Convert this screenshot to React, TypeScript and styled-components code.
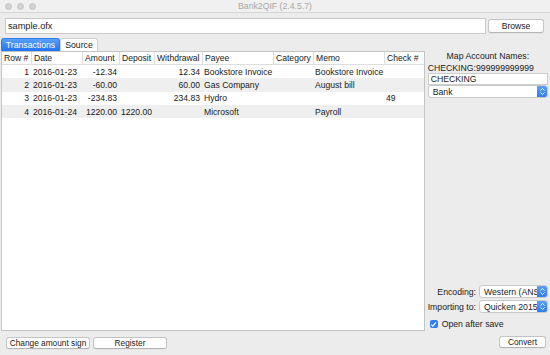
import styled, { createGlobalStyle } from 'styled-components';

const GlobalStyle = createGlobalStyle`
  html, body {
    margin: 0;
    padding: 0;
    background: #ececec;
  }
  * {
    box-sizing: border-box;
  }
`;

const Window = styled.div`
  width: 550px;
  height: 355px;
  display: flex;
  flex-direction: column;
  background: #ececec;
  font-family: 'Liberation Sans', Arial, sans-serif;
  font-size: 8.7px;
  color: #1a1a1a;
  overflow: hidden;
`;

const TitleBar = styled.div`
  position: relative;
  height: 13px;
  flex: 0 0 13px;
  display: flex;
  align-items: center;
  justify-content: center;
  background: #f0f0f0;
  border-bottom: 1px solid #d6d6d6;
  color: #a8a8a8;
`;

const Lights = styled.div`
  position: absolute;
  left: 5px;
  top: 3px;
  display: flex;
  gap: 5px;
`;

const Light = styled.span`
  width: 7px;
  height: 7px;
  border-radius: 50%;
  background: #d3d3d3;
  border: 1px solid #c6c6c6;
`;

const FileRow = styled.div`
  display: flex;
  align-items: center;
  gap: 2px;
  padding: 5px 6px 4px 5px;
`;

const FileInput = styled.div`
  flex: 1;
  height: 16px;
  background: #fff;
  border: 1px solid #c9c9c9;
  display: flex;
  align-items: center;
  padding-left: 2px;
  font-size: 9.2px;
`;

const Button = styled.button<{ $width?: number }>`
  width: ${(p) => (p.$width ? `${p.$width}px` : 'auto')};
  height: 12px;
  padding: 0;
  background: #fff;
  border: 1px solid #c4c4c4;
  border-bottom-color: #b4b4b4;
  border-radius: 3px;
  font-family: inherit;
  font-size: 8.3px;
  color: #1a1a1a;
  line-height: 10px;
  white-space: nowrap;
  box-shadow: 0 0.5px 0 rgba(0, 0, 0, 0.05);
`;

const BrowseButton = styled(Button)`
  height: 14px;
  font-size: 8.6px;
`;

const Main = styled.div`
  flex: 1;
  display: flex;
  min-height: 0;
`;

const LeftCol = styled.div`
  width: 425px;
  display: flex;
  flex-direction: column;
  padding-left: 1px;
`;

const Tabs = styled.div`
  height: 13px;
  display: flex;
  align-items: flex-end;
`;

const Tab = styled.div<{ $active?: boolean; $width: number }>`
  width: ${(p) => p.$width}px;
  height: 13px;
  display: flex;
  align-items: center;
  justify-content: center;
  border-radius: 3px 3px 0 0;
  background: ${(p) => (p.$active ? 'linear-gradient(#5aa0f8, #1f73f2)' : '#fff')};
  color: ${(p) => (p.$active ? '#fff' : '#1a1a1a')};
  border: 1px solid ${(p) => (p.$active ? '#2f7cf0' : '#cfcfcf')};
  border-bottom: none;
`;

const TablePanel = styled.div`
  height: 280px;
  background: #fff;
  border: 1px solid #c3c3c3;
  font-size: 8.6px;
`;

const COLUMNS = '30px 51px 37px 35px 48px 71px 40px 71px 38px';

const Row = styled.div<{ $striped?: boolean }>`
  display: grid;
  grid-template-columns: ${COLUMNS};
  height: 13.3px;
  align-items: center;
  background: ${(p) => (p.$striped ? '#efefef' : '#fff')};
`;

const HeaderRow = styled(Row)`
  height: 13px;
  border-bottom: 1px solid #dedede;
`;

const HeadCell = styled.div`
  height: 100%;
  display: flex;
  align-items: center;
  padding-left: 2px;
  border-right: 1px solid #dedede;
  white-space: nowrap;
  overflow: hidden;
  &:last-child {
    border-right: none;
  }
`;

const Cell = styled.div<{ $right?: boolean }>`
  padding: 0 3px 0 1px;
  text-align: ${(p) => (p.$right ? 'right' : 'left')};
  white-space: nowrap;
`;

const ButtonBar = styled.div`
  display: flex;
  gap: 3px;
  padding: 6px 0 0 5px;
`;

const RightCol = styled.div`
  flex: 1;
  display: flex;
  flex-direction: column;
  padding: 13px 2px 7px 3px;
`;

const PanelTitle = styled.div`
  text-align: center;
  height: 11px;
  line-height: 11px;
`;

const AccountLabel = styled.div`
  height: 10px;
  line-height: 10px;
  margin-top: 1px;
  white-space: nowrap;
`;

const TextField = styled.div`
  height: 12px;
  background: #fff;
  border: 1px solid #cdcdcd;
  display: flex;
  align-items: center;
  padding-left: 2px;
`;

const SelectBox = styled.div<{ $width?: number }>`
  position: relative;
  flex: 0 0 auto;
  width: ${(p) => (p.$width ? `${p.$width}px` : '100%')};
  height: 13px;
  background: #fff;
  border: 1px solid #c9c9c9;
  border-radius: 3px;
  display: flex;
  align-items: center;
  padding-left: 4px;
  padding-right: 12px;
  white-space: nowrap;
  overflow: hidden;
`;

const Stepper = styled.span`
  position: absolute;
  right: -1px;
  top: -1px;
  bottom: -1px;
  width: 11px;
  border-radius: 0 3px 3px 0;
  background: linear-gradient(#5ea3f8, #2a79f3);
  display: flex;
  align-items: center;
  justify-content: center;
`;

const Spacer = styled.div`
  flex: 1;
`;

const FieldRow = styled.div`
  display: flex;
  align-items: center;
  justify-content: flex-end;
  gap: 3px;
  margin-bottom: 2px;
  white-space: nowrap;
`;

const CheckRow = styled.div`
  display: flex;
  align-items: center;
  gap: 4px;
  padding-left: 2px;
  margin-top: 4px;
`;

const CheckBox = styled.span`
  width: 8px;
  height: 8px;
  border-radius: 2px;
  background: #2f7df4;
  display: flex;
  align-items: center;
  justify-content: center;
`;

const ConvertRow = styled.div`
  display: flex;
  justify-content: flex-end;
  margin-top: 7px;
  padding-right: 2px;
`;

const Chevrons = () => (
  <svg width="7" height="9" viewBox="0 0 7 9">
    <path d="M1.5 3.5 L3.5 1.5 L5.5 3.5 M1.5 5.5 L3.5 7.5 L5.5 5.5" fill="none" stroke="#fff" strokeWidth="1" />
  </svg>
);

type Txn = {
  row: number;
  date: string;
  amount: string;
  deposit: string;
  withdrawal: string;
  payee: string;
  memo: string;
  check: string;
};

const rows: Txn[] = [
  { row: 1, date: '2016-01-23', amount: '-12.34', deposit: '', withdrawal: '12.34', payee: 'Bookstore Invoice', memo: 'Bookstore Invoice', check: '' },
  { row: 2, date: '2016-01-23', amount: '-60.00', deposit: '', withdrawal: '60.00', payee: 'Gas Company', memo: 'August bill', check: '' },
  { row: 3, date: '2016-01-23', amount: '-234.83', deposit: '', withdrawal: '234.83', payee: 'Hydro', memo: '', check: '49' },
  { row: 4, date: '2016-01-24', amount: '1220.00', deposit: '1220.00', withdrawal: '', payee: 'Microsoft', memo: 'Payroll', check: '' },
];

const headers = ['Row #', 'Date', 'Amount', 'Deposit', 'Withdrawal', 'Payee', 'Category', 'Memo', 'Check #'];

export default function App() {
  return (
    <Window>
      <GlobalStyle />
      <TitleBar>
        <Lights>
          <Light />
          <Light />
          <Light />
        </Lights>
        Bank2QIF (2.4.5.7)
      </TitleBar>

      <FileRow>
        <FileInput>sample.ofx</FileInput>
        <BrowseButton $width={56}>Browse</BrowseButton>
      </FileRow>

      <Main>
        <LeftCol>
          <Tabs>
            <Tab $active $width={59}>Transactions</Tab>
            <Tab $width={38}>Source</Tab>
          </Tabs>
          <TablePanel>
            <HeaderRow>
              {headers.map((h) => (
                <HeadCell key={h}>{h}</HeadCell>
              ))}
            </HeaderRow>
            {rows.map((r, i) => (
              <Row key={r.row} $striped={i % 2 === 1}>
                <Cell $right>{r.row}</Cell>
                <Cell>{r.date}</Cell>
                <Cell $right>{r.amount}</Cell>
                <Cell>{r.deposit}</Cell>
                <Cell $right>{r.withdrawal}</Cell>
                <Cell>{r.payee}</Cell>
                <Cell />
                <Cell>{r.memo}</Cell>
                <Cell>{r.check}</Cell>
              </Row>
            ))}
          </TablePanel>
          <ButtonBar>
            <Button $width={84}>Change amount sign</Button>
            <Button $width={74}>Register</Button>
          </ButtonBar>
        </LeftCol>

        <RightCol>
          <PanelTitle>Map Account Names:</PanelTitle>
          <AccountLabel>CHECKING:999999999999</AccountLabel>
          <TextField>CHECKING</TextField>
          <SelectBox>
            Bank
            <Stepper>
              <Chevrons />
            </Stepper>
          </SelectBox>

          <Spacer />

          <FieldRow>
            Encoding:
            <SelectBox $width={69}>
              Western (ANSI)
              <Stepper>
                <Chevrons />
              </Stepper>
            </SelectBox>
          </FieldRow>
          <FieldRow>
            Importing to:
            <SelectBox $width={69}>
              Quicken 2015
              <Stepper>
                <Chevrons />
              </Stepper>
            </SelectBox>
          </FieldRow>
          <CheckRow>
            <CheckBox>
              <svg width="7" height="7" viewBox="0 0 7 7">
                <path d="M1.2 3.6 L2.9 5.2 L5.9 1.4" fill="none" stroke="#fff" strokeWidth="1.2" />
              </svg>
            </CheckBox>
            Open after save
          </CheckRow>
          <ConvertRow>
            <Button $width={47}>Convert</Button>
          </ConvertRow>
        </RightCol>
      </Main>
    </Window>
  );
}
